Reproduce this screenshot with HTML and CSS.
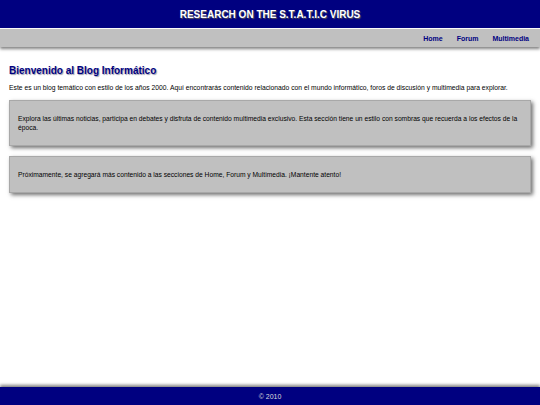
FILE: index.html
```html
<!DOCTYPE html>
<html lang="es">
<head>
<meta charset="utf-8">
<title>Research on the S.T.A.T.I.C Virus</title>
<link rel="stylesheet" href="styles.css">
</head>
<body>
<div class="page">
  <header class="site-header">
    <h1 class="site-title">RESEARCH ON THE S.T.A.T.I.C VIRUS</h1>
  </header>
  <nav class="site-nav">
    <a href="#" class="nav-link">Home</a>
    <a href="#" class="nav-link">Forum</a>
    <a href="#" class="nav-link">Multimedia</a>
  </nav>
  <main class="content">
    <h2 class="welcome">Bienvenido al Blog Informático</h2>
    <p class="intro">Este es un blog temático con estilo de los años 2000. Aquí encontrarás contenido relacionado con el mundo informático, foros de discusión y multimedia para explorar.</p>
    <section class="panel">
      <p>Explora las últimas noticias, participa en debates y disfruta de contenido multimedia exclusivo. Esta sección tiene un estilo con sombras que recuerda a los efectos de la época.</p>
    </section>
    <section class="panel">
      <p>Próximamente, se agregará más contenido a las secciones de Home, Forum y Multimedia. ¡Mantente atento!</p>
    </section>
  </main>
  <footer class="site-footer">© 2010</footer>
</div>
</body>
</html>
```
FILE: styles.css
```css
html, body {
  margin: 0;
  padding: 0;
  height: 100%;
}
body {
  font-family: "Liberation Sans", Arial, sans-serif;
  background: #ffffff;
  color: #000000;
}
.page {
  min-height: 100%;
  display: flex;
  flex-direction: column;
}
.site-header {
  background: #000080;
  height: 28px;
  display: flex;
  align-items: center;
  justify-content: center;
}
.site-title {
  margin: 0;
  color: #ffffff;
  font-size: 10px;
  font-weight: bold;
  text-shadow: 1px 1px 1px #555555;
}
.site-nav {
  background: #c0c0c0;
  height: 18px;
  margin-top: 1px;
  display: flex;
  justify-content: flex-end;
  align-items: center;
  gap: 14px;
  padding-right: 11px;
  box-shadow: 0 2px 3px #808080;
}
.nav-link {
  color: #000080;
  font-size: 7px;
  font-weight: bold;
  text-decoration: none;
}
.content {
  flex: 1;
  padding: 18px 9px 0 9px;
}
.welcome {
  margin: 0;
  color: #000080;
  font-size: 10px;
  font-weight: bold;
  text-shadow: 1px 1px 1px #9999aa;
}
.intro {
  margin: 7px 0 8px 0;
  font-size: 6.75px;
  line-height: 9px;
}
.panel {
  background: #c0c0c0;
  border: 1px solid #a8a8a8;
  box-shadow: 2px 2px 4px #707070;
  padding: 13px 8px;
  margin-bottom: 10px;
}
.panel p {
  margin: 0;
  font-size: 6.7px;
  line-height: 9px;
}
.site-footer {
  background: #000080;
  color: #dddddd;
  font-size: 7px;
  height: 18px;
  display: flex;
  align-items: center;
  justify-content: center;
  box-shadow: 0 -2px 3px #808080;
}
```
